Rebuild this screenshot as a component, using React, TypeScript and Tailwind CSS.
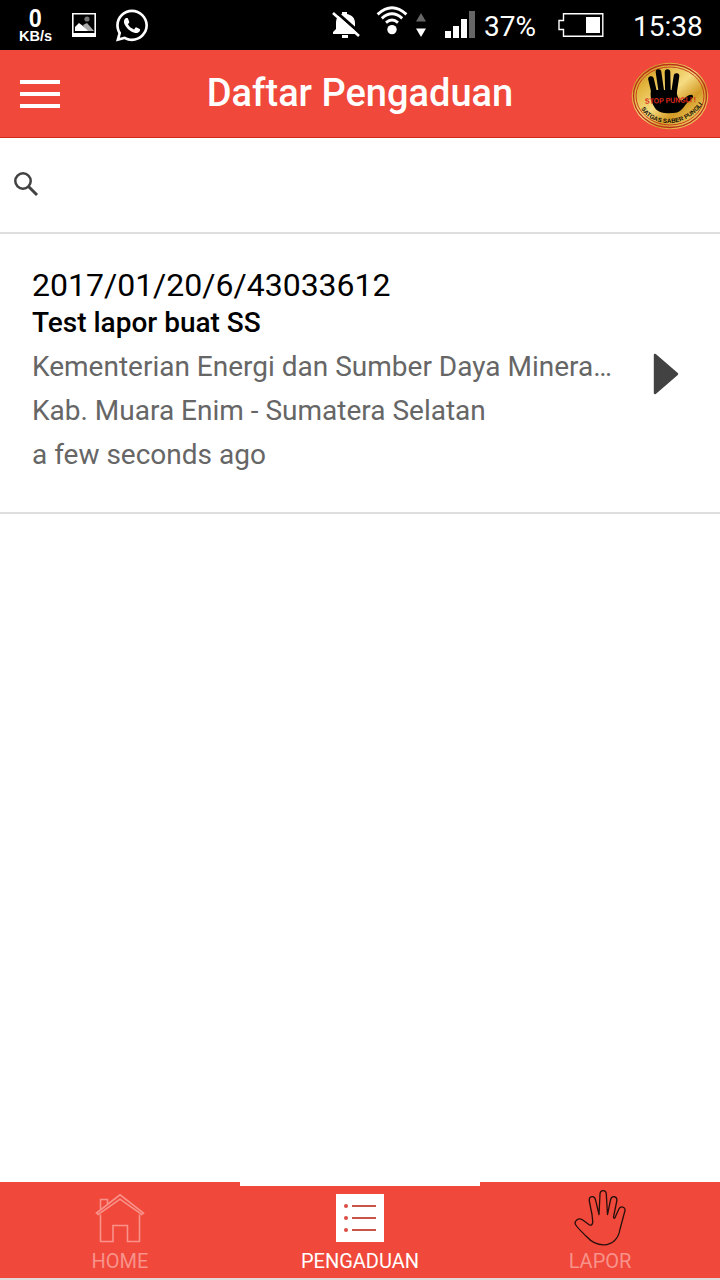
import type { ReactNode } from "react";
import { FaWhatsapp } from "react-icons/fa";

function StatusBar() {
  return (
    <div className="flex h-[50px] shrink-0 items-center bg-black text-white">
      <div className="ml-[18px] flex w-[35px] flex-col items-center pt-px font-['Liberation_Sans',Arial,sans-serif] font-bold">
        <span className="origin-center scale-x-90 text-[26px] leading-[21px]">0</span>
        <span className="text-[14.5px] leading-[15px]">KB/s</span>
      </div>
      <svg className="ml-[19px] h-[24px] w-[24px]" viewBox="0 0 24 24">
        <path fillRule="evenodd" fill="#fff" d="M0 0H24V24H0ZM1.6 1.6V20H22.4V1.6Z" />
        <circle cx="15" cy="6" r="2.6" fill="#777" />
        <path d="M11 12l4-2 7 8h-8z" fill="#aaa" />
        <path d="M3 18v-4l4-4 4 3 5 5z" fill="#fff" />
      </svg>
      <FaWhatsapp className="ml-[20px] h-[37px] w-[32px]" />
      <svg className="ml-[184px] h-[28px] w-[28px]" viewBox="0 0 28 28">
        <path fill="#fff" d="M10 1h5v2c5 1 8 4 8 9v7l3 4H1v-2l3-3v-6c0-5 2-8 6-9zM10 24h6v3h-6z" />
        <path d="M3 0L29 23" stroke="#000" strokeWidth="3" />
        <path d="M1 2L27 25" stroke="#fff" strokeWidth="2.6" />
      </svg>
      <svg className="mb-[8px] ml-[16px] h-[30px] w-[32px]" viewBox="0 0 32 30">
        <g fill="none" stroke="#fff" strokeWidth="2.8">
          <path d="M1.6 8.4Q16-4.8 30.4 8.4" />
          <path d="M5.8 12.4Q16 3.2 26.2 12.4" />
          <path d="M10 16.6Q16 11.4 22 16.6" />
        </g>
        <circle cx="16" cy="23.6" r="4.7" fill="#fff" />
      </svg>
      <svg className="ml-[7px] h-[24px] w-[12px]" viewBox="0 0 12 24">
        <path d="M1 8.6L6 0l5 8.6z" fill="#666" />
        <path d="M1 15.4h10L6 24z" fill="#fff" />
      </svg>
      <svg className="mb-px ml-[18px] h-[27px] w-[30px]" viewBox="0 0 30 27">
        <path d="M0 20h6v7H0zM8 15h6v12H8zM16 8h6v19h-6z" fill="#fff" />
        <path d="M24 0h6v27h-6z" fill="#666" />
      </svg>
      <span className="ml-[9px] w-[53px] whitespace-nowrap pt-[3px] text-[28px] leading-[34px]">37%</span>
      <svg className="ml-[21px] h-[24px] w-[46px]" viewBox="0 0 46 24">
        <path d="M5.5.7H44.8V23.3H5.5V16.5H1V7.5H5.5Z" fill="none" stroke="#fff" strokeWidth="1.4" />
        <path d="M28 4h14v16H28z" fill="#fff" />
      </svg>
      <span className="ml-[29px] whitespace-nowrap pt-[3px] text-[28px] leading-[34px]">15:38</span>
    </div>
  );
}

function SealLogo() {
  return (
    <svg className="h-[68px] w-[78px]" viewBox="0 0 78 68">
      <defs>
        <linearGradient id="gold" x1="0" y1="0" x2="1" y2="1">
          <stop offset="0" stopColor="#b97b13" />
          <stop offset=".25" stopColor="#e2b43c" />
          <stop offset=".48" stopColor="#f6dc83" />
          <stop offset=".66" stopColor="#d39b26" />
          <stop offset=".85" stopColor="#efcb62" />
          <stop offset="1" stopColor="#b77a15" />
        </linearGradient>
        <path id="rim" d="M9 45C20 67 58 68 74 38" />
      </defs>
      <ellipse cx="39" cy="34" rx="38.3" ry="33.3" fill="url(#gold)" />
      <ellipse cx="39" cy="34" rx="36.5" ry="31.5" fill="none" stroke="#b8301a" strokeWidth="1.3" />
      <ellipse cx="39" cy="34" rx="34" ry="29" fill="none" stroke="#c8401c" strokeWidth="1" />
      <g stroke="#000" strokeWidth="5.6" strokeLinecap="round">
        <path d="M20 17L24 34" />
        <path d="M27.5 10L31 34" />
        <path d="M36.5 10L37 34" />
        <path d="M45.5 14L42.5 34" />
      </g>
      <path d="M20 28L45 28C46 34 48 39 51 38.5C54 36 58 32 61 33C64 34 60 38 57 40C53 44 51 49 46 50.5C39 52 28 52 24 46C20 40 19 34 20 28Z" fill="#000" />
      <text x="14" y="41" fill="#d8291e" fontSize="7.6" fontWeight="700" fontFamily="Liberation Sans, Arial, sans-serif" textLength="51" lengthAdjust="spacingAndGlyphs" transform="rotate(-2 39 38)">
        STOP PUNGLI !
      </text>
      <text fill="#130d02" fontSize="6.2" fontWeight="700" fontFamily="Liberation Sans, Arial, sans-serif">
        <textPath href="#rim" startOffset="2" textLength="73" lengthAdjust="spacingAndGlyphs">SATGAS SABER PUNGLI</textPath>
      </text>
    </svg>
  );
}

function Header() {
  return (
    <header className="flex h-[88px] shrink-0 items-center justify-between border-b border-[#cf2a1d] bg-[#f0483a] pl-5 pr-[11px] text-white">
      <div className="flex w-[78px] flex-col gap-2">
        <span className="h-1 w-10 bg-white" />
        <span className="h-1 w-10 bg-white" />
        <span className="h-1 w-10 bg-white" />
      </div>
      <h1 className="mb-[2px] mr-[9px] whitespace-nowrap text-[38px] font-medium leading-[48px]">Daftar Pengaduan</h1>
      <div className="pt-[5px]">
        <SealLogo />
      </div>
    </header>
  );
}

function Tab({ label, active = false, children }: { label: string; active?: boolean; children: ReactNode }) {
  return (
    <div className={active ? "flex flex-1 flex-col items-center border-t-4 border-white pt-2 text-white" : "flex flex-1 flex-col items-center pt-2 text-[#f8928a]"}>
      {children}
      <span className={active ? "mt-[7px] text-[20px] leading-[24px]" : "mt-[3px] text-[20px] leading-[24px]"}>{label}</span>
    </div>
  );
}

export default function App() {
  return (
    <div className="flex h-[1280px] w-[720px] flex-col overflow-hidden bg-white font-['Roboto',sans-serif]">
      <StatusBar />
      <Header />
      <div className="flex h-[96px] shrink-0 items-center border-b-2 border-[#dedede] pl-[13px]">
        <svg className="mb-[2px] h-[26px] w-[26px]" viewBox="0 0 26 26" fill="none" stroke="#424242">
          <circle cx="10" cy="10" r="7.7" strokeWidth="2.5" />
          <path d="M15.5 15.5L24 24" strokeWidth="3" />
        </svg>
      </div>
      <main className="flex flex-1 flex-col">
        <div className="flex h-[280px] items-center justify-between border-b-2 border-[#dedede] pl-8 pr-[41px]">
          <div className="h-full w-[580px] pt-8 text-[28px] text-[#666]">
            <div className="mb-px text-[32px] leading-[38px] text-black">2017/01/20/6/43033612</div>
            <div className="mb-1 font-medium leading-[36px] text-black">Test lapor buat SS</div>
            <div className="whitespace-nowrap leading-[44px]">Kementerian Energi dan Sumber Daya Minera…</div>
            <div className="leading-[44px]">Kab. Muara Enim - Sumatera Selatan</div>
            <div className="leading-[44px]">a few seconds ago</div>
          </div>
          <svg className="mt-[2px] h-[42px] w-[26px]" viewBox="0 0 26 42">
            <path d="M2 2L24 21L2 40Z" fill="#424242" stroke="#424242" strokeWidth="2.4" strokeLinejoin="round" />
          </svg>
        </div>
      </main>
      <nav className="flex h-[98px] shrink-0 border-b-2 border-[#e4dada] bg-[#f0483a]">
        <Tab label="HOME">
          <svg className="mt-[2px] h-[54px] w-[50px]" viewBox="0 0 50 54" fill="none" stroke="currentColor" strokeWidth="1.6">
            <path d="M1.5 21L25 2.8L48.5 21L46.8 22.5L25 7.2L3.2 22.5ZM5.5 18V7.5h7v5M5.5 22.5V49.5H18V33.5H32.5V49.5H44.5V22.5" />
          </svg>
        </Tab>
        <Tab label="PENGADUAN" active>
          <svg className="h-[48px] w-[48px]" viewBox="0 0 48 48">
            <path d="M0 0h48v48H0z" fill="#fff" />
            <path d="M16 12h24M16 24h24M16 36h24" stroke="#c9544a" strokeWidth="2" />
            <g fill="#dc4c43">
              <circle cx="10" cy="12" r="2" />
              <circle cx="10" cy="24" r="2" />
              <circle cx="10" cy="36" r="2" />
            </g>
          </svg>
        </Tab>
        <Tab label="LAPOR">
          <svg className="h-[56px] w-[52px]" viewBox="0 0 52 56" fill="none" stroke="#26100c" strokeWidth="1.3" strokeLinejoin="round">
            <path d="M18 24.5L15.3 11C14.7 6 20.5 5 21.5 9.8L25 24.5L26 4C26.3-.4 32-.4 32.3 4L33.5 24.5L36.5 10C37.5 5 43.5 6 42.8 11L39.5 27C39.8 29 41 28.5 41.5 26.5L45 18.7C46.8 15.5 51.6 16.8 51 20.5L45.8 40C44.5 49 38 54.5 30 54.8C23 55 17 51.5 12.5 46.5C8 42 4.5 39 1.8 35C-.5 31.5 4 27.4 8 29.5L15.2 34.7C17.5 36 19 34 18.7 31Z" />
          </svg>
        </Tab>
      </nav>
    </div>
  );
}
